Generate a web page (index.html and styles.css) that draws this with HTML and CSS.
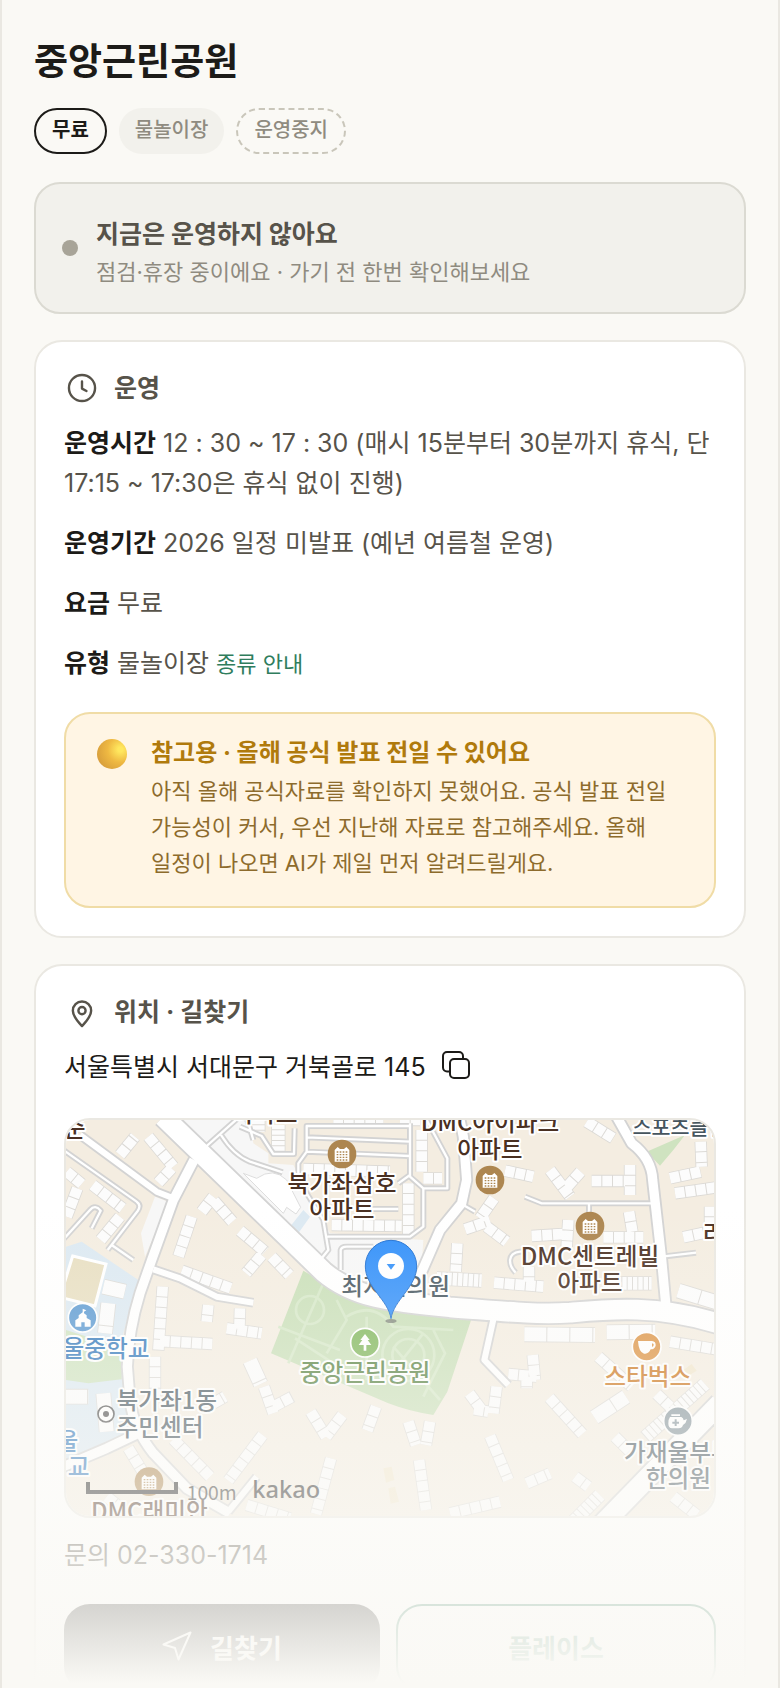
FILE: index.html
```html
<!DOCTYPE html>
<html lang="ko">
<head>
    <meta charset="UTF-8">
    <meta name="viewport" content="width=device-width, initial-scale=1.0">
    <title>중앙근린공원</title>
    <link rel="stylesheet" href="styles.css">
</head>
<body>
    <main class="page">
        <header class="page-header">
            <h1>중앙근린공원</h1>
            <ul class="chips">
                <li class="chip chip-free">무료</li>
                <li class="chip chip-type">물놀이장</li>
                <li class="chip chip-closed">운영중지</li>
            </ul>
        </header>

        <section class="status">
            <span class="status-dot"></span>
            <div>
                <h2>지금은 운영하지 않아요</h2>
                <p>점검·휴장 중이에요 · 가기 전 한번 확인해보세요</p>
            </div>
        </section>

        <section class="card">
            <h2 class="card-title">
                <svg class="icon" viewBox="0 0 24 24"><circle cx="12" cy="12" r="8.7"/><path d="M12 7.6v4.8l3 1.6"/></svg>
                운영
            </h2>
            <div class="info">
                <p><strong>운영시간</strong> 12 : 30 ~ 17 : 30 (매시 15분부터 30분까지 휴식, 단 17:15 ~ 17:30은 휴식 없이 진행)</p>
                <p><strong>운영기간</strong> 2026 일정 미발표 (예년 여름철 운영)</p>
                <p><strong>요금</strong> 무료</p>
                <p><strong>유형</strong> 물놀이장 <a href="#types">종류 안내</a></p>
            </div>
            <div class="notice">
                <span class="notice-dot"></span>
                <div>
                    <h3>참고용 · 올해 공식 발표 전일 수 있어요</h3>
                    <p>아직 올해 공식자료를 확인하지 못했어요. 공식 발표 전일 가능성이 커서, 우선 지난해 자료로 참고해주세요. 올해 일정이 나오면 AI가 제일 먼저 알려드릴게요.</p>
                </div>
            </div>
        </section>

        <section class="card">
            <h2 class="card-title">
                <svg class="icon" viewBox="0 0 24 24"><path d="M12 21.4c-2.6-2.7-6.1-6.4-6.1-10.3a6.1 6.1 0 0 1 12.2 0c0 3.9-3.5 7.6-6.1 10.3z"/><circle cx="12" cy="11.1" r="2.4"/></svg>
                위치 · 길찾기
            </h2>
            <div class="address">
                <span>서울특별시 서대문구 거북골로 145</span>
                <button type="button" class="copy" aria-label="주소 복사">
                    <svg viewBox="0 0 28 28"><rect x="8" y="8" width="19" height="19" rx="4"/><path d="M8 20.5H5a4 4 0 0 1-4-4V5a4 4 0 0 1 4-4h12a4 4 0 0 1 4 4v3"/></svg>
                </button>
            </div>

            <div class="map">
                <svg viewBox="78 60 1944 1188" preserveAspectRatio="xMidYMid slice">
                    <defs>
                        <g id="roads">
                            <g class="w-main"><path d="M370 50 850 515C940 592 1050 605 1230 622C1370 632 1480 645 1590 638C1700 628 1850 612 2040 672"/><path d="M1685 1275 2040 910"/></g>
                            <g class="w-wide">
                                <path d="M462 180 400 300 335 480 300 580C275 660 265 720 262 800L270 900Q280 985 340 1060L440 1165 570 1240"/>
                                <path d="M295 1000 200 1045 70 1100"/>
                                <path d="M1260 60 1270 110 1280 240 1265 310 1200 390 1130 550"/>
                                <path d="M1730 50 1775 130Q1835 175 1838 240L1865 480 1878 620"/>
                            </g>
                            <g class="w-mid">
                                <path d="M340 508 420 535 530 590 640 608M565 1235 650 1130M120 105 350 275 400 295M1362 650 1333 780 1405 855"/>
                            </g>
                            <g class="w-thin">
                                <path d="M70 150 290 305Q305 315 293 333L203 450M215 435 280 480M70 418 150 330Q165 312 182 332L155 385"/>
                                <path d="M500 138 590 58M543 105Q580 165 630 185L728 217M622 60 640 120M600 80 665 108 700 162H762L764 85"/>
                                <path d="M1110 78H800V155L775 190V240L850 360 865 450 845 475M800 112 1110 125M800 155 1110 168M862 410H1110L1150 380V265H1222V175L1160 60M1110 70V230L1150 265M902 510V450Q905 440 920 440H1000M980 327H1075M1110 225 1075 250"/>
                                <path d="M1270 315 1305 335M1455 290 1505 310H1845M1647 310V350M1865 470 1968 458M1460 455H1440C1400 460 1405 495 1427 518"/>
                            </g>
                        </g>
                        <g id="houses">
                            <g class="row">
                                <path d="M240 165 285 110M325 110 400 200M395 205 355 248M80 215 125 252M112 265 80 350M158 255 248 325M240 350 182 420M485 335 520 290M522 302 577 365M455 350 415 470"/>
                                <path d="M600 392 675 455M665 465 618 520M695 470 748 525M425 512 572 565M368 560 355 752M505 615 500 665M600 625 598 690M360 723 517 732M345 770V895M560 685 665 700"/>
                                <path d="M672 860 700 940M700 920 757 890M812 935 858 1010M907 945 858 1010M1008 920 982 992M400 1018 510 1130M668 1005 565 1142M265 1045 308 1115M873 1075 828 1242M620 1215 750 1255M520 910 555 890M200 1190 250 1230"/>
                                <path d="M1145 90V215M1150 235H1206M1105 250V405M790 207 1050 215M875 375 1085 378M1395 212 1480 230M1530 210 1590 290M1622 215 1580 262M1655 243H1755M1770 195V285M1640 65 1720 115M1362 295 1320 355M1275 388 1350 362M1340 380 1400 425M1252 430 1247 515"/>
                                <path d="M1362 548 1510 560M1475 408 1570 402M1585 360 1580 440M1690 412H1810M1767 335 1777 395M1890 235 1982 215M1905 280 2030 262M1982 125 1985 200M1930 412 2030 390M1467 500V545M2010 320V380M880 60H1030M1080 60H1140"/>
                                <path d="M1478 765 1485 840M1405 822 1490 830M1460 830V865M1288 880 1325 930M1370 860 1360 940M1302 928 1345 935M1528 893 1627 1002M1675 770 1775 860M1850 882 1890 920M1350 1008 1405 1140M1460 1150 1530 1120M1605 1130 1645 1160M1137 1080 1158 1230M1105 965 1128 1035M1170 965 1158 1035M1230 1240 1380 1205M1900 1190 1970 1245M1725 1010 1780 1065M1890 725 2030 748"/>
                            </g>
                            <g class="row dense"><path d="M1190 535 1325 542M1715 550H1835M1995 852 1815 1012M655 60V95M715 75V155M1680 1185 1580 1285"/></g>
                            <g class="row large"><path d="M630 782 662 852M1453 703 1665 705M1700 697 1846 695M1663 952 1758 890M1915 572 2030 607M190 560 255 575M205 610 195 700M75 890H145M190 880 200 995"/></g>
                        </g>
                        <g id="apartment">
                            <circle r="43"/>
                            <path class="glyph" d="M-22-12-13-21-6-15H6l7-6 9 9V23H-22z"/>
                            <path class="windows" d="M-16-6H17M-16 2H17M-16 10H17M-16 18H17"/>
                        </g>
                    </defs>

                    <!-- ground -->
                    <rect class="land" x="0" y="0" width="2100" height="1300"/>
                    <path class="paved" d="M425 60H630L640 130 685 160V190L760 195 870 400 1150 420 1140 580 880 510z M345 290 385 305 315 470 303 400z"/>
                    <path class="water" d="M78 440 125 425 295 540 250 700 270 1000 78 1080z M750 380 790 330 810 350 775 400z"/>
                    <path class="lawn" d="M78 690 250 745 245 838 145 850 78 840z M1820 155 1935 105 1900 150 1860 197z"/>
                    <path class="plaza" d="M610 220 650 235Q700 200 740 240L782 322 768 342 740 322 730 340z"/>
                    <path class="field" d="M98 468 198 492 165 618 60 592z"/>
                    <path class="mini" d="M1030 1105l25-5 8 40-25 8z M1045 1165l20-5 12 45-25 6z M1930 810l25-18 15 20-25 15z"/>

                    <path class="park" d="M790 512 693 760 1045 910Q1110 935 1180 945L1222 875 1295 655 1060 630 900 575z"/>
                    <g class="trail">
                        <circle cx="810" cy="630" r="42"/><circle cx="1105" cy="765" r="78"/><circle cx="1105" cy="765" r="48"/>
                        <path d="M850 550 745 790M715 680 900 750M765 715 880 790M890 600 920 660 860 760M920 650Q1000 600 1060 680L1240 690M1030 850 1150 700M1060 740 1200 900M980 650V840M1180 690 1215 760 1150 890"/>
                    </g>

                    <use href="#houses" class="edge"/>
                    <use href="#houses" class="face"/>
                    <use href="#roads" class="casing"/>
                    <use href="#roads" class="surface"/>

                    <!-- place names -->
                    <g class="label brown">
                        <text x="104" y="112">준</text>
                        <text x="675" y="66">아파트</text>
                        <text x="906" y="276">북가좌삼호</text><text x="906" y="355">아파트</text>
                        <text x="1350" y="94">DMC아이파크</text><text x="1350" y="173">아파트</text>
                        <text x="1650" y="496">DMC센트레빌</text><text x="1650" y="574">아파트</text>
                        <text x="2022" y="426">라</text>
                        <text x="328" y="1260">DMC래미안</text>
                    </g>
                    <g class="label slate">
                        <text class="small" x="1920" y="104">스포츠클럽</text>
                        <text x="1067" y="585">최지선의원</text>
                        <text x="380" y="928">북가좌1동</text><text x="360" y="1007">주민센터</text>
                        <text x="1915" y="1083">가재울부부</text><text x="1915" y="1161">한의원</text>
                    </g>
                    <g class="label blue">
                        <text x="198" y="770">울중학교</text>
                        <text x="82" y="1050">울</text><text x="116" y="1125">교</text>
                    </g>
                    <text class="label green" x="975" y="843">중앙근린공원</text>
                    <text class="label orange" x="1823" y="855">스타벅스</text>

                    <!-- place icons -->
                    <g class="poi">
                        <use href="#apartment" class="brown" x="906" y="162"/>
                        <use href="#apartment" class="brown" x="1350" y="240"/>
                        <use href="#apartment" class="brown" x="1650" y="378"/>
                        <use href="#apartment" class="brown" x="327" y="1145"/>
                        <g class="blue" transform="translate(128 653)"><circle r="43"/><path class="glyph" d="M-22 27V8l10-7V-7L0-16V-27L11-22 4-18V-13L12-7V1L24 8V27H6V14H-4V27z"/></g>
                        <g class="green" transform="translate(975 728)"><circle r="43"/><path class="glyph" d="M0-26 14-8H8L19 7H4V24H-4V7H-19L-8-8H-14z"/></g>
                        <g class="orange" transform="translate(1820 740)"><circle r="43"/><path class="glyph" fill-rule="evenodd" d="M-26-17H16Q28-16 27-3 24 8 12 8 6 21-4 21H-8Q-24 16-26-17zM16-10V1Q22-1 21-8z"/></g>
                        <g class="slate" transform="translate(1914 963)"><circle r="43"/><path class="glyph" d="M-20-20H6V-15H-20zM-24-12H10Q16-10 17-2L27-6Q25 6 15 12 12 22 2 22H-18Q-29 20-29 8-30-4-24-12z"/><path class="cross" d="M-17 5H3M-7-5V15"/></g>
                    </g>
                    <g class="office"><circle cx="198" cy="942" r="24"/><circle class="core" cx="198" cy="942" r="9"/></g>

                    <ellipse class="pin-shadow" cx="1053" cy="663" rx="17" ry="6"/>
                    <path class="pin" d="M1053 656C1045 600 975 560 976 498a77 77 0 0 1 154 0C1131 560 1061 600 1053 656z"/>
                    <circle class="pin-hole" cx="1053" cy="498" r="39"/>
                    <path class="pin-arrow" d="M1040 492h26l-13 17z"/>

                    <path class="scale" d="M144 1146V1176H408V1146"/>
                    <text class="scale-text" x="440" y="1199">100m</text>
                    <text class="brand" x="637" y="1193">kakao</text>
                </svg>
            </div>

            <p class="contact">문의 02-330-1714</p>

            <div class="actions">
                <button type="button" class="btn btn-dark">
                    <svg viewBox="0 0 30 30"><path d="M1.5 13.5 28.5 1.5 16.5 28.5 13 17z"/></svg>
                    길찾기
                </button>
                <button type="button" class="btn btn-line">플레이스</button>
            </div>
        </section>
        <div class="fade"></div>
    </main>
</body>
</html>
```
FILE: styles.css
```css
* {
    box-sizing: border-box;
}

body {
    margin: 0;
    background-color: #faf9f5;
    color: #1c1b18;
    font-family: Inter, "Noto Sans CJK KR", sans-serif;
    font-size: 25px;
    line-height: 40px;
    word-break: keep-all;
}

h1, h2, h3, p, ul {
    margin: 0;
    padding: 0;
}

button {
    font-family: inherit;
    cursor: pointer;
}

.page {
    position: relative;
    height: 100vh;
    overflow: hidden;
    padding: 32px;
    border: solid #eae8e2;
    border-width: 0 2px;
}

.page-header h1 {
    font-size: 37px;
    line-height: 60px;
    font-weight: 700;
}

.chips {
    display: flex;
    gap: 12px;
    margin-top: 16px;
    list-style: none;
}

.chip {
    padding: 6px 16px 8px;
    border-radius: 23px;
    font-size: 20px;
    line-height: 32px;
    font-weight: 500;
    color: #8f8b80;
}

.chip-free {
    padding: 4px 16px 6px;
    border: 2px solid #1c1b18;
    color: #1c1b18;
    font-weight: 700;
}

.chip-type {
    background-color: #f2f1ec;
}

.chip-closed {
    padding: 4px 16px 6px;
    border: 2px dashed #c9c6ba;
}

.status {
    display: flex;
    align-items: center;
    gap: 18px;
    margin-top: 28px;
    padding: 24px 26px;
    border: 2px solid #dbdad2;
    border-radius: 26px;
    background-color: #f2f1ec;
}

.status-dot {
    width: 16px;
    height: 16px;
    border-radius: 50%;
    background-color: #a8a498;
}

.status h2 {
    padding-top: 4px;
    font-size: 25px;
    line-height: 44px;
}

.status p {
    color: #8f8b80;
    font-size: 22px;
    line-height: 32px;
}

.card {
    margin-top: 26px;
    padding: 28px;
    border: 2px solid #eae8e2;
    border-radius: 28px;
    background-color: #fff;
}

.card-title {
    display: flex;
    align-items: center;
    gap: 14px;
    margin-bottom: 17px;
    font-size: 25px;
    line-height: 36px;
}

.status h2,
.card-title {
    color: #57534a;
}

.icon {
    width: 36px;
    height: 36px;
    stroke-width: 1.6;
}

.icon,
.copy svg,
.btn svg {
    fill: none;
    stroke: currentColor;
    stroke-linecap: round;
    stroke-linejoin: round;
}

.info {
    display: grid;
    gap: 20px;
    color: #57534a;
}

.info strong {
    color: #1c1b18;
}

.info a {
    color: #2f7d5d;
    font-size: 22px;
    text-decoration: none;
}

.notice {
    display: flex;
    gap: 24px;
    margin-top: 28px;
    padding: 19px 30px 25px 31px;
    border: 2px solid #f0dca6;
    border-radius: 26px;
    background-color: #fff5e4;
}

.notice-dot {
    flex: none;
    width: 30px;
    height: 30px;
    margin-top: 6px;
    border-radius: 50%;
    background: radial-gradient(circle at 78% 35%, #ffe75e 8%, #efb942 42%, #d9a03c 78%, #cf7a5c 100%);
}

.notice h3 {
    color: #b07a0c;
    font-size: 24px;
    line-height: 40px;
}

.notice p {
    color: #8d6b2c;
    font-size: 22px;
    line-height: 36px;
}

.address {
    display: flex;
    align-items: center;
    gap: 16px;
}

.copy {
    display: flex;
    padding: 0 0 4px;
    border: 0;
    background: none;
    color: #1c1b18;
}

.copy svg {
    width: 28px;
    height: 28px;
    stroke-width: 2;
}

.map {
    height: 400px;
    margin-top: 31px;
    overflow: hidden;
    border: 2px solid #eae8e2;
    border-radius: 26px;
}

.map svg {
    display: block;
    width: 100%;
    height: 100%;
}

.land { fill: #f4ede1; }
.paved { fill: #f7f7f7; }
.water { fill: #dce9f2; }
.lawn { fill: #cfe3c0; }
.plaza { fill: #fff; stroke: #ddd; stroke-width: 3; }
.field { fill: #e8dfc2; stroke: #fff; stroke-width: 9; }
.mini { fill: #f1e6cc; }
.park { fill: #c9dfb8; }
.trail { fill: none; stroke: #d6e8c8; stroke-width: 8; }

.casing, .surface, .edge, .face {
    fill: none;
    stroke-linejoin: round;
}

.casing { stroke: #d3d3d3; --extra: 11px; }
.surface { stroke: #fff; --extra: 0px; }
.w-main { stroke-width: calc(59px + var(--extra)); }
.w-wide { stroke-width: calc(28px + var(--extra)); }
.w-mid { stroke-width: calc(18px + var(--extra)); }
.w-thin { stroke-width: calc(7px + var(--extra)); }

.edge { stroke: #dcdad6; --extra: 5px; }
.face { stroke: #fcfcfc; --extra: 0px; --dash: 29px 3px; --dash-dense: 13px 3px; --dash-large: 66px 3px; }
.row { stroke-width: calc(32px + var(--extra)); stroke-dasharray: var(--dash, none); }
.row.dense { stroke-width: calc(38px + var(--extra)); stroke-dasharray: var(--dash-dense, none); }
.row.large { stroke-width: calc(42px + var(--extra)); stroke-dasharray: var(--dash-large, none); }

.label {
    font-family: "Noto Sans CJK KR", sans-serif;
    font-size: 71px;
    font-weight: 500;
    text-anchor: middle;
    stroke: #fff;
    stroke-width: 12px;
    stroke-linejoin: round;
    paint-order: stroke;
}

.label .small { font-size: 62px; }
.label.brown { fill: #4a3022; }
.label.slate { fill: #46555e; }
.label.blue { fill: #3278bb; }
.label.green { fill: #55803f; }
.label.orange { fill: #cb741a; }

.poi circle { stroke: #fff; stroke-width: 5; }
.poi .brown { fill: #ad8650; }
.poi .blue { fill: #5c9ad2; }
.poi .green { fill: #7fb65a; }
.poi .orange { fill: #dc9140; }
.poi .slate { fill: #86959d; }
.glyph { fill: #fff; }
.windows { stroke: #ad8650; stroke-width: 4; stroke-dasharray: 5 4; }
.poi .cross { stroke: #86959d; stroke-width: 6; }

.office { fill: #fff; stroke: #4d4d4d; stroke-width: 5; }
.office .core { fill: #4d4d4d; stroke: none; }

.pin { fill: #3290fa; stroke: #1f6fd0; stroke-width: 3; }
.pin-hole { fill: #fff; }
.pin-arrow { fill: #3290fa; }
.pin-shadow { fill: #555; opacity: 0.6; }

.scale { fill: none; stroke: #222; stroke-width: 12; }

.scale-text {
    fill: #333;
    font-family: "Noto Sans CJK KR", sans-serif;
    font-size: 58px;
    font-weight: 400;
}

.brand {
    fill: #222;
    font-family: "Noto Sans", sans-serif;
    font-size: 71px;
    font-weight: 500;
}

.contact {
    margin-top: 17px;
    color: #57534a;
}

.actions {
    display: grid;
    grid-template-columns: 316fr 320fr;
    gap: 16px;
    margin-top: 29px;
}

.btn {
    display: flex;
    align-items: center;
    justify-content: center;
    gap: 18px;
    height: 88px;
    padding: 0 0 4px;
    border: 2px solid #1c1b18;
    border-radius: 26px;
    font-size: 26px;
    font-weight: 700;
}

.btn svg {
    width: 30px;
    height: 30px;
    stroke-width: 2;
}

.btn-dark {
    background-color: #1c1b18;
    color: #fff;
}

.btn-line {
    border-color: #2f7d5d;
    background-color: #fff;
    color: #2f7d5d;
}

/* content dissolves into the page colour at the bottom */
.fade {
    position: absolute;
    left: -2px;
    right: -2px;
    bottom: 0;
    height: 480px;
    background: linear-gradient(rgba(250, 249, 245, 0), #faf9f5 99%);
    pointer-events: none;
}
```
